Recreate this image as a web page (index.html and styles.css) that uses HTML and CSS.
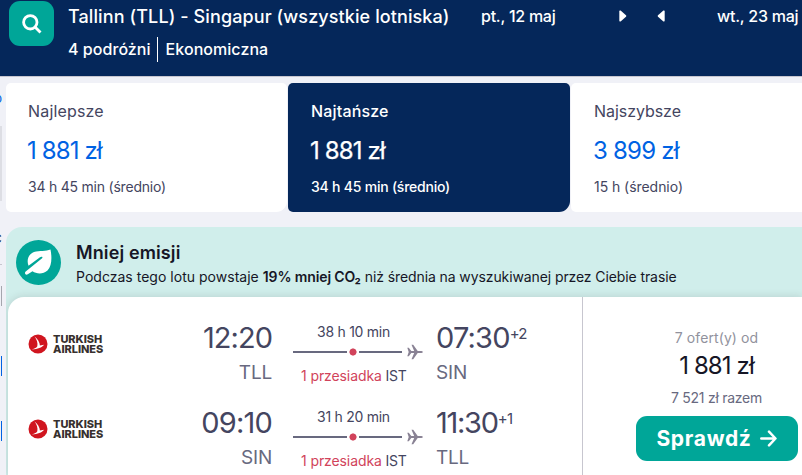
FILE: index.html
```html
<!DOCTYPE html>
<html lang="pl">
<head>
<meta charset="utf-8">
<title>Tallinn – Singapur</title>
<link rel="stylesheet" href="styles.css">
</head>
<body>
<header class="header">
  <button class="search" aria-label="Szukaj">
    <svg width="22" height="22" viewBox="0 0 22 22" fill="none" stroke="#fff" stroke-width="2.8"><circle cx="9.3" cy="9.3" r="6.7"/><path d="M14 14l5.5 5.5"/></svg>
  </button>
  <div class="trip">
    <div class="route">Tallinn (TLL) - Singapur (wszystkie lotniska)</div>
    <div class="pax"><span>4 podróżni</span><span class="cabin">Ekonomiczna</span></div>
  </div>
  <div class="dates">
    <span class="out">pt., 12 maj</span>
    <svg class="next" width="8" height="12" viewBox="0 0 8 12"><path d="M.3 1.500Q.3 0 1.600.6L7 5.200q.8.8 0 1.600L1.600 11.400Q.3 12 .3 10.500z" fill="#fff"/></svg>
    <svg class="prev" width="8" height="12" viewBox="0 0 8 12"><path d="M7.700 1.500Q7.700 0 6.400.6L1 5.200q-.8.8 0 1.600l5.400 4.600q1.300.6 1.300-.9z" fill="#fff"/></svg>
    <span class="back">wt., 23 maj</span>
  </div>
</header>
<div class="page">
  <aside class="rail">
    <i class="link-edge">o</i><i class="panel-edge"></i><i class="text-edge">c</i><i class="rule"></i><i class="mark"></i><i class="mark blue"></i><i class="mark blue second"></i>
  </aside>
  <main class="main">
    <section class="tabs">
      <div class="tab"><div class="name">Najlepsze</div><div class="price">1 881 zł</div><div class="avg">34 h 45 min (średnio)</div></div>
      <div class="tab active"><div class="name">Najtańsze</div><div class="price">1 881 zł</div><div class="avg">34 h 45 min (średnio)</div></div>
      <div class="tab fast"><div class="name">Najszybsze</div><div class="price">3 899 zł</div><div class="avg">15 h (średnio)</div></div>
    </section>
    <section class="offer">
      <div class="eco">
        <svg width="45" height="45" viewBox="0 0 45 45"><circle cx="22.500" cy="22.500" r="22.500" fill="#00a698"/><path d="M34.500 9.500C36 17 36 26 31.500 30.500 27 34.500 20.500 34 16.500 31.200L11.800 34.300Q10 35.300 9.200 33.800 8.500 32.300 10 31.300L25.800 18.600Q27 17.500 26 16.800 25.200 16.400 24 17.300L12.500 25.800C10.300 20 12.500 14 18 12 23.500 10.600 30 11.500 34.500 9.500z" fill="#fff"/></svg>
        <div>
          <div class="eco-title">Mniej emisji</div>
          <div class="eco-text">Podczas tego lotu powstaje <b>19% mniej CO₂</b> <span>niż średnia na wyszukiwanej przez Ciebie trasie</span></div>
        </div>
      </div>
      <div class="ticket">
        <div class="legs">
          <div class="leg">
            <div class="airline">
              <svg width="20" height="20" viewBox="0 0 20 20"><circle cx="10" cy="10" r="9.500" fill="#d0151f"/><path d="M6.500 2.500C9.800 5 11.800 8.500 11.900 11.600l4.300-.8C13.500 13.600 10 15.300 3.800 15.400 6.800 14.600 8.700 13.400 9.300 12.200 10 9 8.800 5.500 6.500 2.500z" fill="#fff"/></svg>
              <div class="brand"><span>TURKISH</span><span>AIRLINES</span></div>
            </div>
            <div class="dep"><div class="time t1">12:20</div><div class="code">TLL</div></div>
            <div class="path">
              <div class="dur">38 h 10 min</div>
              <div class="line"><i></i><svg width="16" height="16" viewBox="0 0 16 16"><path d="M.3 3.800h1.500L4.300 7h2.900L4.500.8h1.700L10.700 7h3.600q1.500.2 1.500 1t-1.500 1h-3.600L6.200 15.200H4.500L7.200 9H4.300l-2.500 3.200H.3L1.700 8z" fill="#898294"/></svg></div>
              <div class="stops"><span>1 przesiadka</span> IST</div>
            </div>
            <div class="arr"><div class="time t2">07:30<sup>+2</sup></div><div class="code">SIN</div></div>
          </div>
          <div class="leg">
            <div class="airline">
              <svg width="20" height="20" viewBox="0 0 20 20"><circle cx="10" cy="10" r="9.500" fill="#d0151f"/><path d="M6.500 2.500C9.800 5 11.800 8.500 11.900 11.600l4.300-.8C13.500 13.600 10 15.300 3.800 15.400 6.800 14.600 8.700 13.400 9.300 12.200 10 9 8.800 5.500 6.500 2.500z" fill="#fff"/></svg>
              <div class="brand"><span>TURKISH</span><span>AIRLINES</span></div>
            </div>
            <div class="dep"><div class="time t2">09:10</div><div class="code">SIN</div></div>
            <div class="path">
              <div class="dur">31 h 20 min</div>
              <div class="line"><i></i><svg width="16" height="16" viewBox="0 0 16 16"><path d="M.3 3.800h1.500L4.300 7h2.900L4.500.8h1.700L10.700 7h3.600q1.500.2 1.500 1t-1.500 1h-3.600L6.200 15.200H4.500L7.200 9H4.300l-2.500 3.200H.3L1.700 8z" fill="#898294"/></svg></div>
              <div class="stops"><span>1 przesiadka</span> IST</div>
            </div>
            <div class="arr"><div class="time t3">11:30<sup>+1</sup></div><div class="code">TLL</div></div>
          </div>
        </div>
        <div class="buy">
          <div class="count">7 ofert(y) od</div>
          <div class="total">1 881 zł</div>
          <div class="sum">7 521 zł razem</div>
          <button class="cta"><span>Sprawdź</span><svg width="17" height="17" viewBox="0 0 17 17" fill="none" stroke="#fff" stroke-width="2.500" stroke-linecap="round" stroke-linejoin="round"><path d="M1.300 8.500h14M9 1.700l6.500 6.800L9 15.300"/></svg></button>
        </div>
      </div>
    </section>
  </main>
</div>
</body>
</html>
```
FILE: styles.css
```css
* { box-sizing: border-box; }
body { margin: 0; height: 475px; overflow: hidden; background: #f0f1f7; font-family: Inter, "Liberation Sans", sans-serif; color: #444560; white-space: nowrap; }
button { border: 0; padding: 0; font-family: inherit; }
svg { display: block; flex: none; }

.header { display: flex; height: 77px; background: #05275a; border-bottom: 1px solid #c7c6cf; color: #fff; font-weight: 500; padding-left: 9px; }
.search { width: 45px; height: 45px; margin-top: 1px; border-radius: 11px; background: #00a698; display: flex; align-items: center; justify-content: center; }
.trip { width: 413px; margin-left: 14px; }
.route { padding-top: 1px; font-size: 18px; line-height: 32px; letter-spacing: .1px; }
.pax { display: flex; align-items: center; margin-top: 4px; font-size: 16px; line-height: 25px; letter-spacing: .05px; }
.cabin { margin-left: 6px; padding-left: 8px; border-left: 1px solid #fff; }
.dates { display: flex; align-items: center; height: 32px; font-size: 16px; letter-spacing: -.25px; }
.out { width: 138px; }
.prev { margin-left: 30px; }
.back { margin-left: 52px; }

.page { display: flex; }
.rail { width: 6px; height: 398px; flex: none; overflow: hidden; }
.rail i { display: block; width: 2px; font-style: normal; overflow: hidden; }
.link-edge { height: 16px; margin-top: 13px; font-size: 13px; line-height: 16px; color: #0062e3; direction: rtl; }
.panel-edge { height: 75px; margin-top: 20px; background: #dddee4; }
.text-edge { height: 16px; margin-top: 28px; font-size: 16px; line-height: 16px; color: #161616; direction: rtl; }
.rule { height: 1px; margin-top: 19px; background: #c7c6cf; }
.rail .mark { height: 20px; margin-top: 21px; border-right: 1px solid #a5a6ae; }
.rail .blue { margin-top: 50px; border-color: #0062e3; }
.rail .second { margin-top: 45px; }

.main { flex: 1; min-width: 0; }
.tabs { display: flex; gap: 1px; padding-top: 6px; }
.tab { width: 282px; flex: none; height: 129px; padding: 17px 22px 0; background: #fff; border-radius: 5px 5px 11px 5px; }
.tab:first-child { width: 281px; }
.tab:last-child { flex: 1; padding-left: 23px; border-radius: 5px 0 0 5px; }
.name { font-size: 16px; line-height: 22px; letter-spacing: .17px; }
.price { margin-top: 12px; margin-left: -1px; font-size: 24px; line-height: 34px; letter-spacing: -.88px; color: #0062e3; }
.avg { margin-top: 10px; font-size: 14px; line-height: 18px; letter-spacing: -.22px; }
.active { background: #05275a; color: #fff; font-weight: 500; padding-left: 23px; }
.active .price { color: #fff; font-weight: 400; -webkit-text-stroke: .25px #fff; }
.fast .name { letter-spacing: -.05px; }
.fast .price { letter-spacing: -.78px; }
.fast .avg { letter-spacing: -.05px; }

.offer { margin-top: 15px; height: 263px; overflow: hidden; background: #d0eeeb; border-radius: 16px 0 0 0; }
.eco { display: flex; height: 70px; padding: 13px 0 0 10px; color: #161626; }
.eco > div { margin-left: 15px; }
.eco-title { font-size: 18px; font-weight: 600; line-height: 26px; letter-spacing: .12px; }
.eco-text { font-size: 14px; line-height: 22px; letter-spacing: .02px; }
.eco-text b { font-weight: 600; letter-spacing: -.12px; }
.eco-text span { letter-spacing: -.1px; }
.ticket { display: flex; height: 178px; margin-left: 2px; background: #fff; border-radius: 16px 0 0 0; box-shadow: 0 0 8px rgba(37, 32, 31, .15); }
.legs { width: 575px; flex: none; border-right: 1px solid #c7c6cf; padding-top: 18px; }
.leg { display: flex; height: 85px; }
.airline { display: flex; align-items: center; height: 58px; width: 146px; padding-left: 20px; gap: 5px; font-size: 11px; font-weight: 800; letter-spacing: -.05px; color: #37302e; }
.brand span { display: block; height: 10px; line-height: 10px; }
.dep { width: 118px; text-align: right; }
.time { height: 46px; font-size: 29px; line-height: 46px; }
.t1 { letter-spacing: -.97px; }
.t2 { letter-spacing: -.8px; }
.t3 { letter-spacing: -1.280px; }
.time sup { font-size: 15px; line-height: 0; vertical-align: 9px; letter-spacing: -.8px; }
.code { padding-top: 1px; font-size: 19px; line-height: 22px; letter-spacing: -.2px; color: #68697f; }
.path { width: 130px; margin-left: 21px; font-size: 14px; }
.dur { padding: 8px 0 0 24px; line-height: 18px; letter-spacing: -.26px; }
.line { display: flex; align-items: center; height: 22px; }
.line i { width: 109px; height: 8px; margin-right: 5px; background: radial-gradient(circle at 60px 4px, #d1435b 3.200px, #fff 3.900px 6px, transparent 6px), linear-gradient(transparent 3px, #68697f 3px 5px, transparent 5px); }
.stops { padding-left: 8px; line-height: 20px; letter-spacing: -.25px; margin-top: 3px; }
.stops span { color: #d1435b; letter-spacing: -.1px; }
.arr { margin-left: 13px; }
.buy { flex: 1; padding: 32px 0 0 48px; display: flex; flex-direction: column; align-items: center; }
.count { font-size: 14px; line-height: 18px; letter-spacing: .1px; color: #91929d; }
.total { margin-top: 1px; font-size: 24px; line-height: 36px; letter-spacing: -.9px; color: #161626; }
.sum { margin-top: 5px; font-size: 14px; line-height: 18px; letter-spacing: -.26px; color: #68697f; }
.cta { display: flex; align-items: center; justify-content: center; gap: 8px; width: 162px; height: 45px; margin-top: 9px; border-radius: 11px; background: #00a698; color: #fff; font-size: 21px; font-weight: 700; letter-spacing: .7px; }
```
